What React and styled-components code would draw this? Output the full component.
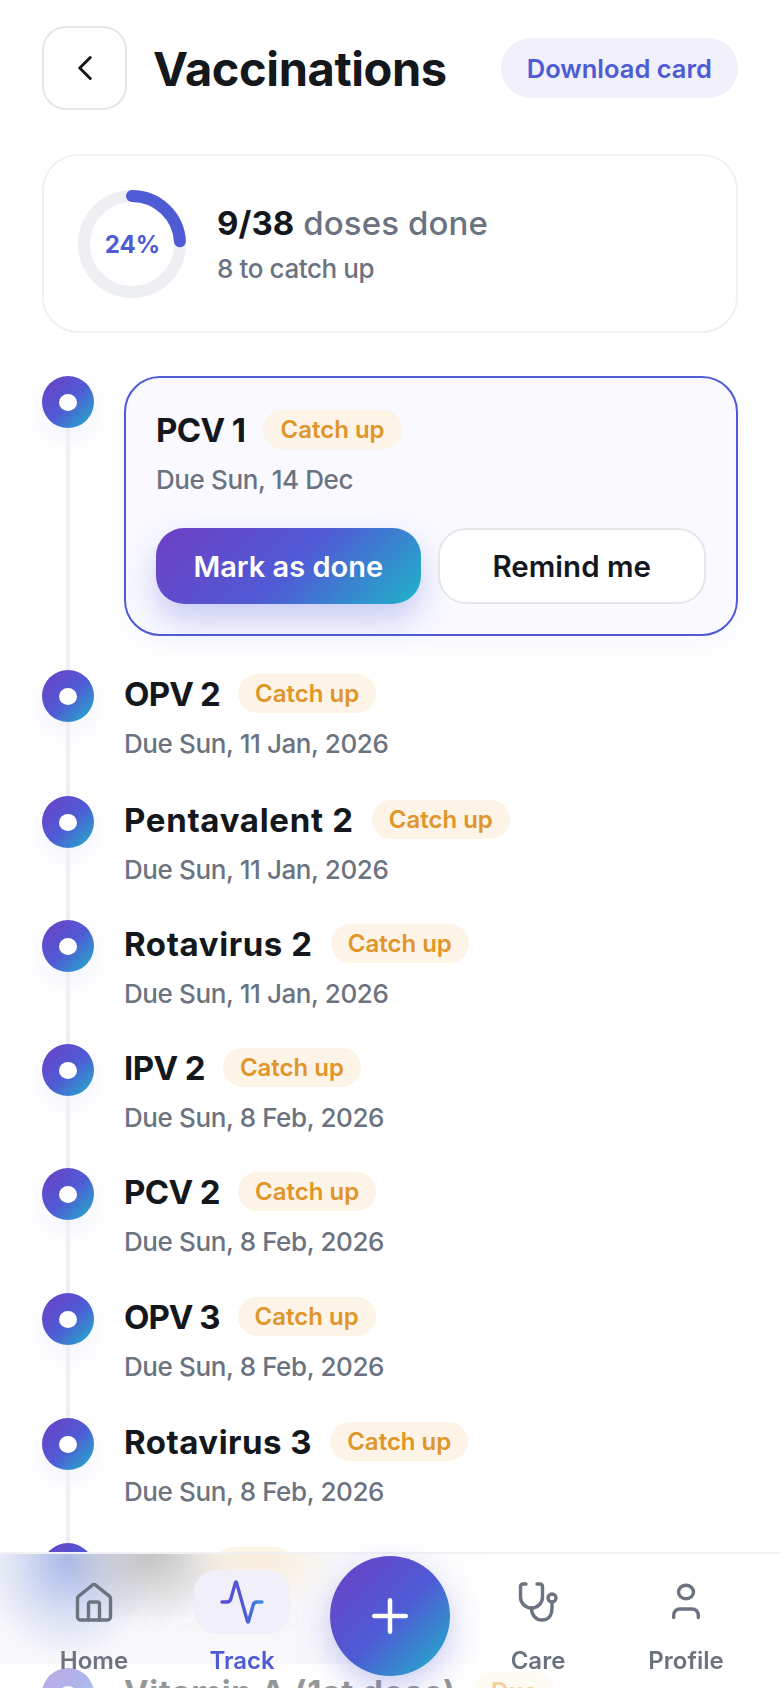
import React from "react";
import styled, { createGlobalStyle } from "styled-components";
import { ChevronLeft, Plus } from "lucide-react";

const GlobalStyle = createGlobalStyle`
  html, body {
    margin: 0;
    height: 100%;
    overflow: hidden;
    background: #fff;
  }
  * {
    box-sizing: border-box;
  }
  body {
    font-family: Inter, "Noto Sans", sans-serif;
    color: #14171c;
  }
`;

const GRADIENT = "linear-gradient(135deg, #6e3fc5 0%, #4f5bd5 52%, #1fb4c9 100%)";

const Page = styled.div`
  height: 1688px;
  overflow: hidden;
  padding: 26px 42px 0;
`;

const Header = styled.header`
  display: flex;
  align-items: center;
  height: 84px;
`;

const BackButton = styled.button`
  width: 85px;
  height: 84px;
  flex-shrink: 0;
  display: flex;
  align-items: center;
  justify-content: center;
  padding: 0;
  background: #fff;
  color: #14171c;
  border: 2px solid #e4e7eb;
  border-radius: 24px;
`;

const Title = styled.h1`
  flex: 1;
  margin: 0 0 0 26px;
  font-size: 47px;
  font-weight: 700;
  letter-spacing: -0.4px;
`;

const DownloadButton = styled.button`
  height: 60px;
  padding: 0 26px;
  border: 0;
  border-radius: 30px;
  background: #f0effa;
  color: #4f5bd5;
  font-family: inherit;
  font-size: 25.5px;
  font-weight: 600;
`;

const Summary = styled.section`
  display: flex;
  align-items: center;
  gap: 31px;
  height: 179px;
  margin-top: 44px;
  padding: 0 34px;
  border: 2px solid #f0f0f4;
  border-radius: 36px;
`;

const Ring = styled.div`
  position: relative;
  width: 108px;
  height: 108px;
  flex-shrink: 0;
`;

const RingLabel = styled.span`
  position: absolute;
  inset: 0;
  display: flex;
  align-items: center;
  justify-content: center;
  padding: 2px 0 0 1px;
  color: #4f5bd5;
  font-size: 24px;
  font-weight: 700;
`;

const SummaryText = styled.div`
  display: flex;
  flex-direction: column;
  gap: 10px;
`;

const DoseCount = styled.div`
  color: #6b7280;
  font-size: 33px;
  font-weight: 500;
  letter-spacing: 0.1px;

  b {
    color: #14171c;
    font-weight: 700;
  }
`;

const Muted = styled.div`
  color: #6b7280;
  font-size: 26px;
  font-weight: 500;
  letter-spacing: -0.4px;
`;

const Timeline = styled.div`
  display: flex;
  flex-direction: column;
  margin-top: 43px;
`;

const Item = styled.div`
  display: flex;
  gap: 30px;
  height: ${(props) => props.$height}px;
`;

const Rail = styled.div`
  display: flex;
  flex-direction: column;
  align-items: center;
  width: 52px;
  flex-shrink: 0;
`;

const Dot = styled.div`
  display: flex;
  align-items: center;
  justify-content: center;
  width: 52px;
  height: 52px;
  flex-shrink: 0;
  border-radius: 50%;
  background: ${GRADIENT};
  box-shadow: 0 10px 26px rgba(79, 91, 213, 0.08);

  &::after {
    content: "";
    width: 18px;
    height: 17px;
    border-radius: 50%;
    background: #fff;
  }
`;

const Line = styled.div`
  flex: 1;
  width: 4px;
  background: #f0f0f5;
`;

const Content = styled.div`
  flex: 1;
  min-width: 0;
`;

const ActiveCard = styled.div`
  height: 260px;
  padding: 32px 30px 0;
  border: 2px solid #4f5bd5;
  border-radius: 36px;
  background: #f9f9ff;
  box-shadow: 0 14px 30px rgba(79, 91, 213, 0.04);
`;

const NameRow = styled.div`
  display: flex;
  align-items: center;
  gap: 18px;
  height: 39px;
  margin-top: ${(props) => (props.$flush ? 0 : 4)}px;
  margin-bottom: ${(props) => (props.$flush ? 1 : 0)}px;
`;

const Name = styled.span`
  font-size: 33px;
  font-weight: 700;
  letter-spacing: ${(props) => props.$tracking}px;
  white-space: nowrap;
`;

const Badge = styled.span`
  display: flex;
  align-items: center;
  height: 39px;
  padding: 0 17px;
  border-radius: 20px;
  background: #fdf3e6;
  color: #e0952a;
  font-size: 24px;
  font-weight: 600;
  white-space: nowrap;
`;

const DueText = styled(Muted)`
  margin-top: 15px;
`;

const Actions = styled.div`
  display: flex;
  gap: 17px;
  margin-top: 33px;
`;

const PrimaryButton = styled.button`
  flex: 1;
  height: 76px;
  border: 0;
  border-radius: 28px;
  background: ${GRADIENT};
  box-shadow: 0 16px 32px rgba(79, 91, 213, 0.28);
  color: #fff;
  font-family: inherit;
  font-size: 29px;
  font-weight: 600;
`;

const SecondaryButton = styled.button`
  flex: 1;
  height: 76px;
  border: 2px solid #e3e6ea;
  border-radius: 28px;
  background: #fff;
  color: #14171c;
  font-family: inherit;
  font-size: 29.5px;
  font-weight: 600;
`;

const Nav = styled.nav`
  position: fixed;
  left: 0;
  right: 0;
  bottom: 0;
  z-index: 10;
  height: 136px;
  display: grid;
  grid-template-columns: repeat(5, 148px);
  padding: 0 20px;
  border-top: 2px solid #f1f1f5;
  background: rgba(255, 255, 255, 0.55);
`;

/* frosted look of the bar: the colours of the row scrolled under it, spread out */
const NavFrost = styled.div`
  position: absolute;
  top: 0;
  left: 0;
  right: 0;
  height: 110px;
  background:
    radial-gradient(ellipse 80px 62px at 258px 0, rgba(250, 236, 214, 0.95), rgba(250, 236, 214, 0) 100%),
    radial-gradient(ellipse 90px 72px at 150px 0, rgba(192, 192, 192, 0.95), rgba(192, 192, 192, 0) 100%),
    radial-gradient(ellipse 88px 100px at 68px 6px, rgba(168, 184, 232, 1), rgba(198, 208, 240, 0.6) 55%, rgba(198, 208, 240, 0) 100%),
    linear-gradient(90deg, rgba(255, 255, 255, 0) 0, rgba(255, 255, 255, 0) 42%, #fff 64%),
    linear-gradient(rgba(247, 247, 250, 1) 0, rgba(247, 247, 250, 1) 40%, rgba(247, 247, 250, 0.96) 55%);
`;

const NavItem = styled.div`
  position: relative;
  display: flex;
  flex-direction: column;
  align-items: center;
  padding-top: 16px;
  color: ${(props) => (props.$active ? "#4f5bd5" : "#6b7280")};
`;

const NavIcon = styled.div`
  display: flex;
  align-items: center;
  justify-content: center;
  width: 96px;
  height: 64px;
  border-radius: 22px;
  background: ${(props) => (props.$active ? "#f0effa" : "transparent")};
`;

const NavLabel = styled.span`
  margin-top: 12px;
  font-size: 24px;
  font-weight: 600;
`;

const FabSlot = styled.div`
  position: relative;
  display: flex;
  justify-content: center;
  padding-top: 2px;
`;

const Fab = styled.button`
  display: flex;
  align-items: center;
  justify-content: center;
  width: 120px;
  height: 120px;
  padding: 0;
  border: 0;
  border-radius: 50%;
  background: ${GRADIENT};
  box-shadow: 0 12px 32px rgba(79, 91, 213, 0.3);
  color: #fff;
`;

const Icon = ({ children, viewBox = "0 0 48 48", stroke = "currentColor", width = 3.4 }) => (
  <svg
    width="48"
    height="48"
    viewBox={viewBox}
    fill="none"
    stroke={stroke}
    strokeWidth={width}
    strokeLinecap="round"
    strokeLinejoin="round"
  >
    {children}
  </svg>
);

const HomeIcon = () => (
  <Icon>
    <path d="M7.5 20.5a3 3 0 0 1 1.2-2.4L22.2 7.2a3 3 0 0 1 3.6 0L39.3 18.1a3 3 0 0 1 1.2 2.4V39a3 3 0 0 1-3 3H10.5a3 3 0 0 1-3-3z" />
    <path d="M18.5 42V26a2 2 0 0 1 2-2h7a2 2 0 0 1 2 2v16" />
  </Icon>
);

const TrackIcon = () => (
  <Icon viewBox="0 0 24 24" stroke="url(#trackStroke)" width={1.7}>
    <defs>
      <linearGradient id="trackStroke" x1="2" y1="12" x2="22" y2="12" gradientUnits="userSpaceOnUse">
        <stop offset="0" stopColor="#5a4ccf" />
        <stop offset="0.6" stopColor="#4f5bd5" />
        <stop offset="1" stopColor="#3a90d8" />
      </linearGradient>
    </defs>
    <path d="M22 12h-2.48a2 2 0 0 0-1.93 1.46l-2.35 8.36a.25.25 0 0 1-.48 0L9.24 2.18a.25.25 0 0 0-.48 0l-2.35 8.36A2 2 0 0 1 4.49 12H2" />
  </Icon>
);

const CareIcon = () => (
  <Icon>
    <path d="M12 6H9a2.5 2.5 0 0 0-2.5 2.5V19a11 11 0 0 0 22 0V8.5A2.5 2.5 0 0 0 26 6h-3" />
    <path d="M17.5 30c0 7 4 12 10.5 12s10-5 10-12v-5.5" />
    <circle cx="38" cy="20" r="4" />
  </Icon>
);

const ProfileIcon = () => (
  <Icon>
    <ellipse cx="24" cy="14" rx="7.5" ry="6.8" />
    <path d="M11.7 39.5V37a6 6 0 0 1 6-6h12.6a6 6 0 0 1 6 6v2.5" />
  </Icon>
);

const rows = [
  { name: "OPV 2", date: "Due Sun, 11 Jan, 2026", status: "Catch up", height: 126, tracking: -0.8 },
  { name: "Pentavalent 2", date: "Due Sun, 11 Jan, 2026", status: "Catch up", height: 124, tracking: 0.7 },
  { name: "Rotavirus 2", date: "Due Sun, 11 Jan, 2026", status: "Catch up", height: 124, tracking: 0.6 },
  { name: "IPV 2", date: "Due Sun, 8 Feb, 2026", status: "Catch up", height: 124, tracking: -0.6 },
  { name: "PCV 2", date: "Due Sun, 8 Feb, 2026", status: "Catch up", height: 125, tracking: -0.6 },
  { name: "OPV 3", date: "Due Sun, 8 Feb, 2026", status: "Catch up", height: 125, tracking: -1 },
  { name: "Rotavirus 3", date: "Due Sun, 8 Feb, 2026", status: "Catch up", height: 125, tracking: 0.5 },
  { name: "MR 1", date: "Due Sun, 8 Mar, 2026", status: "Due", height: 125, tracking: -0.6 },
  { name: "Vitamin A (1st dose)", date: "Due Sun, 8 Mar, 2026", status: "Due", height: 125, tracking: 0.55 },
];

const App = () => {
  return (
    <Page>
      <GlobalStyle />
      <Header>
        <BackButton aria-label="Back">
          <ChevronLeft size={42} strokeWidth={1.7} />
        </BackButton>
        <Title>Vaccinations</Title>
        <DownloadButton>Download card</DownloadButton>
      </Header>

      <Summary>
        <Ring>
          <svg width="108" height="108" viewBox="0 0 108 108">
            <circle cx="54" cy="54" r="48" fill="none" stroke="#eeeff3" strokeWidth="12" />
            <circle
              cx="54"
              cy="54"
              r="48"
              fill="none"
              stroke="#4f5bd5"
              strokeWidth="12"
              strokeLinecap="round"
              strokeDasharray={`${2 * Math.PI * 48 * 0.24} ${2 * Math.PI * 48}`}
              transform="rotate(-90 54 54)"
            />
          </svg>
          <RingLabel>24%</RingLabel>
        </Ring>
        <SummaryText>
          <DoseCount>
            <b>9/38</b> doses done
          </DoseCount>
          <Muted>8 to catch up</Muted>
        </SummaryText>
      </Summary>

      <Timeline>
        <Item $height={294}>
          <Rail>
            <Dot />
            <Line />
          </Rail>
          <Content>
            <ActiveCard>
              <NameRow $flush>
                <Name $tracking={-0.6}>PCV 1</Name>
                <Badge>Catch up</Badge>
              </NameRow>
              <DueText>Due Sun, 14 Dec</DueText>
              <Actions>
                <PrimaryButton>Mark as done</PrimaryButton>
                <SecondaryButton>Remind me</SecondaryButton>
              </Actions>
            </ActiveCard>
          </Content>
        </Item>
        {rows.map((row) => (
          <Item key={row.name} $height={row.height}>
            <Rail>
              <Dot />
              <Line />
            </Rail>
            <Content>
              <NameRow>
                <Name $tracking={row.tracking}>{row.name}</Name>
                <Badge>{row.status}</Badge>
              </NameRow>
              <DueText>{row.date}</DueText>
            </Content>
          </Item>
        ))}
      </Timeline>

      <Nav>
        <NavFrost />
        <NavItem>
          <NavIcon>
            <HomeIcon />
          </NavIcon>
          <NavLabel>Home</NavLabel>
        </NavItem>
        <NavItem $active>
          <NavIcon $active>
            <TrackIcon />
          </NavIcon>
          <NavLabel>Track</NavLabel>
        </NavItem>
        <FabSlot>
          <Fab aria-label="Add">
            <Plus size={54} strokeWidth={2} />
          </Fab>
        </FabSlot>
        <NavItem>
          <NavIcon>
            <CareIcon />
          </NavIcon>
          <NavLabel>Care</NavLabel>
        </NavItem>
        <NavItem>
          <NavIcon>
            <ProfileIcon />
          </NavIcon>
          <NavLabel>Profile</NavLabel>
        </NavItem>
      </Nav>
    </Page>
  );
};

export default App;
